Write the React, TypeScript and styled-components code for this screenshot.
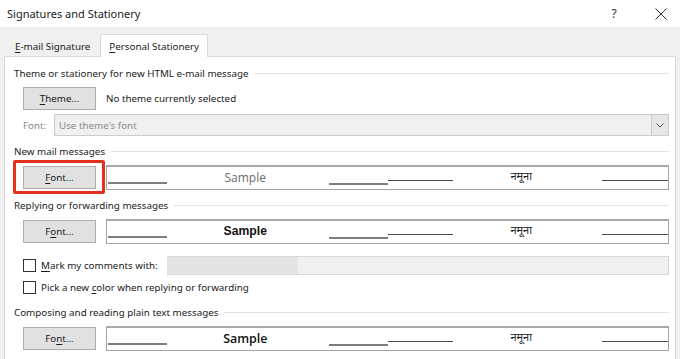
import React from "react";
import styled, { createGlobalStyle } from "styled-components";

const GlobalStyle = createGlobalStyle`
  html, body { margin: 0; padding: 0; background: #ffffff; }
  body { font-family: "Noto Sans", "Open Sans", sans-serif; font-size: 9.8px; color: #161616; }
  * { box-sizing: border-box; }
`;

const Dialog = styled.div`
  width: 680px;
  height: 359px;
  overflow: hidden;
  display: flex;
  flex-direction: column;
  background: #f0f0f0;
`;

const TitleBar = styled.div`
  height: 27px;
  flex: none;
  display: flex;
  align-items: center;
  padding: 0 6px 0 7px;
  background: #ffffff;
`;

const Title = styled.div`
  flex: 1;
  font-size: 11px;
  color: #1a1a1a;
  padding-bottom: 1px;
`;

const TitleButton = styled.div<{ $w: number; $ml?: number }>`
  width: ${(p) => p.$w}px;
  margin-left: ${(p) => p.$ml ?? 0}px;
  display: flex;
  justify-content: center;
  align-items: center;
  color: #333;
  font-size: 12px;
`;

const TabStrip = styled.div`
  height: 29px;
  flex: none;
  display: flex;
  align-items: flex-end;
  padding-left: 5px;
`;

const Tab = styled.div<{ $active?: boolean }>`
  height: ${(p) => (p.$active ? 23 : 20)}px;
  padding: 0 ${(p) => (p.$active ? 8 : 9)}px;
  display: flex;
  align-items: center;
  background: ${(p) => (p.$active ? "#ffffff" : "#f0f0f0")};
  border: 1px solid ${(p) => (p.$active ? "#d9d9d9" : "transparent")};
  border-bottom: none;
  margin-bottom: ${(p) => (p.$active ? -1 : 0)}px;
  position: relative;
  color: #1a1a1a;
`;

const Panel = styled.div`
  flex: 1;
  margin: 0 4px;
  background: #ffffff;
  border: 1px solid #d9d9d9;
  border-bottom: none;
  padding: 8px 6px 0 9px;
  display: flex;
  flex-direction: column;
`;

const GroupHeader = styled.div<{ $mt: number }>`
  display: flex;
  align-items: center;
  gap: 6px;
  height: 16px;
  margin-top: ${(p) => p.$mt}px;
  color: #1a1a1a;
  white-space: nowrap;
  &::after {
    content: "";
    flex: 1;
    height: 1px;
    background: #e3e3e3;
  }
`;

const Row = styled.div<{ $mt: number; $h?: number }>`
  display: flex;
  align-items: center;
  padding-left: 9px;
  margin-top: ${(p) => p.$mt}px;
  height: ${(p) => p.$h ?? 23}px;
`;

const Button = styled.div`
  width: 73px;
  height: 23px;
  flex: none;
  background: #e1e1e1;
  border: 1px solid #adadad;
  display: flex;
  align-items: center;
  justify-content: center;
  color: #1a1a1a;
`;

const Highlight = styled.div`
  position: relative;
  flex: none;
  &::after {
    content: "";
    position: absolute;
    top: -6px;
    bottom: -5px;
    left: -10px;
    right: -9px;
    border: 3px solid #e3311d;
    border-radius: 2px;
    pointer-events: none;
  }
`;

const Note = styled.div`
  margin-left: 10px;
  color: #1a1a1a;
`;

const Label = styled.div<{ $muted?: boolean }>`
  color: ${(p) => (p.$muted ? "#8a8a8a" : "#1a1a1a")};
  width: 31px;
  flex: none;
`;

const Combo = styled.div`
  flex: 1;
  height: 22px;
  display: flex;
  background: #f0f0f0;
  border: 1px solid #cccccc;
  color: #8a8a8a;
`;

const ComboText = styled.div`
  flex: 1;
  padding-left: 4px;
  display: flex;
  align-items: center;
`;

const ComboArrow = styled.div`
  width: 17px;
  border-left: 1px solid #cccccc;
  background: #e6e6e6;
  display: flex;
  align-items: center;
  justify-content: center;
`;

const SampleBox = styled.div`
  flex: 1;
  height: 25px;
  margin-left: 10px;
  border: 1px solid #a3a3a3;
  border-top: 2px solid #a8a8a8;
  display: flex;
  background: #ffffff;
`;

const SampleHalf = styled.div<{ $cols: string }>`
  flex: 1;
  display: grid;
  grid-template-columns: ${(p) => p.$cols};
  align-items: start;
`;

const SampleLine = styled.div<{ $top: number; $thick?: boolean; $pad?: string }>`
  margin-top: ${(p) => p.$top}px;
  height: ${(p) => (p.$thick ? 2 : 1)}px;
  background: ${(p) => (p.$thick ? "#7d7d7d" : "#4a4a4a")};
  margin-left: ${(p) => p.$pad ?? "0"};
`;

const SampleText = styled.div<{ $variant: "light" | "bold" | "plain" | "hindi" }>`
  text-align: center;
  line-height: 21px;
  white-space: nowrap;
  ${(p) =>
    p.$variant === "light"
      ? `font-family: "Open Sans", sans-serif; font-size: 12px; color: #6a6a6a; font-weight: 400;`
      : p.$variant === "bold"
      ? `font-family: "Liberation Sans", Arial, sans-serif; font-size: 12.2px; color: #111; font-weight: 700;`
      : p.$variant === "plain"
      ? `font-family: "Open Sans", sans-serif; font-size: 12.4px; color: #111; font-weight: 600;`
      : `font-family: "Noto Sans Devanagari", "Lohit Devanagari", "Noto Sans", sans-serif; font-size: 11px; color: #222;`}
`;

const CheckRow = styled.label<{ $mt: number; $h: number }>`
  display: flex;
  align-items: center;
  padding-left: 9px;
  margin-top: ${(p) => p.$mt}px;
  height: ${(p) => p.$h}px;
  color: #1a1a1a;
  white-space: nowrap;
`;

const Box = styled.span`
  width: 13px;
  height: 13px;
  flex: none;
  border: 1px solid #333333;
  background: #ffffff;
  margin-right: 5px;
`;

const CheckText = styled.span`
  width: 126px;
  flex: none;
`;

const MarkInput = styled.div`
  flex: 1;
  height: 19px;
  border: 1px solid #d8d8d8;
  border-left: none;
  background: linear-gradient(to right, #e4e4e4 0 131px, #f0f0f0 131px);
`;

const U = styled.span`
  text-decoration: underline;
  text-underline-offset: 2px;
`;

function Sample({ variant }: { variant: "light" | "bold" | "plain" }) {
  return (
    <SampleBox>
      <SampleHalf $cols="60px 1fr 64px">
        <SampleLine $top={15} $thick $pad="1px" />
        <SampleText $variant={variant}>Sample</SampleText>
        <SampleLine $top={16} $thick $pad="5px" />
      </SampleHalf>
      <SampleHalf $cols="65px 1fr 78px">
        <SampleLine $top={13} />
        <SampleText $variant="hindi">नमूना</SampleText>
        <SampleLine $top={13} $pad="12px" />
      </SampleHalf>
    </SampleBox>
  );
}

export default function App() {
  return (
    <>
      <GlobalStyle />
      <Dialog>
        <TitleBar>
          <Title>Signatures and Stationery</Title>
          <TitleButton $w={20}>?</TitleButton>
          <TitleButton $w={26} $ml={24}>
            <svg width="12" height="12" viewBox="0 0 12 12">
              <path d="M0.5 0.5 L11.5 11.5 M11.5 0.5 L0.5 11.5" stroke="#333" strokeWidth="1" fill="none" />
            </svg>
          </TitleButton>
        </TitleBar>
        <TabStrip>
          <Tab>
            <span><U>E</U>-mail Signature</span>
          </Tab>
          <Tab $active>
            <span><U>P</U>ersonal Stationery</span>
          </Tab>
        </TabStrip>
        <Panel>
          <GroupHeader $mt={0}>Theme or stationery for new HTML e-mail message</GroupHeader>
          <Row $mt={6}>
            <Button><span><U>T</U>heme...</span></Button>
            <Note>No theme currently selected</Note>
          </Row>
          <Row $mt={4} $h={22}>
            <Label $muted>Font:</Label>
            <Combo>
              <ComboText>Use theme's font</ComboText>
              <ComboArrow>
                <svg width="8" height="5" viewBox="0 0 8 5">
                  <path d="M0.5 0.5 L4 4 L7.5 0.5" stroke="#555" strokeWidth="1" fill="none" />
                </svg>
              </ComboArrow>
            </Combo>
          </Row>
          <GroupHeader $mt={7}>New mail messages</GroupHeader>
          <Row $mt={6} $h={25}>
            <Highlight>
              <Button><span><U>F</U>ont...</span></Button>
            </Highlight>
            <Sample variant="light" />
          </Row>
          <GroupHeader $mt={7}>Replying or forwarding messages</GroupHeader>
          <Row $mt={6} $h={25}>
            <Button><span>F<U>o</U>nt...</span></Button>
            <Sample variant="bold" />
          </Row>
          <CheckRow $mt={12} $h={19}>
            <Box />
            <CheckText><U>M</U>ark my comments with:</CheckText>
            <MarkInput />
          </CheckRow>
          <CheckRow $mt={5} $h={15}>
            <Box />
            <span>Pick a new <U>c</U>olor when replying or forwarding</span>
          </CheckRow>
          <GroupHeader $mt={9}>Composing and reading plain text messages</GroupHeader>
          <Row $mt={6} $h={25}>
            <Button><span>Fo<U>n</U>t...</span></Button>
            <Sample variant="plain" />
          </Row>
        </Panel>
      </Dialog>
    </>
  );
}
